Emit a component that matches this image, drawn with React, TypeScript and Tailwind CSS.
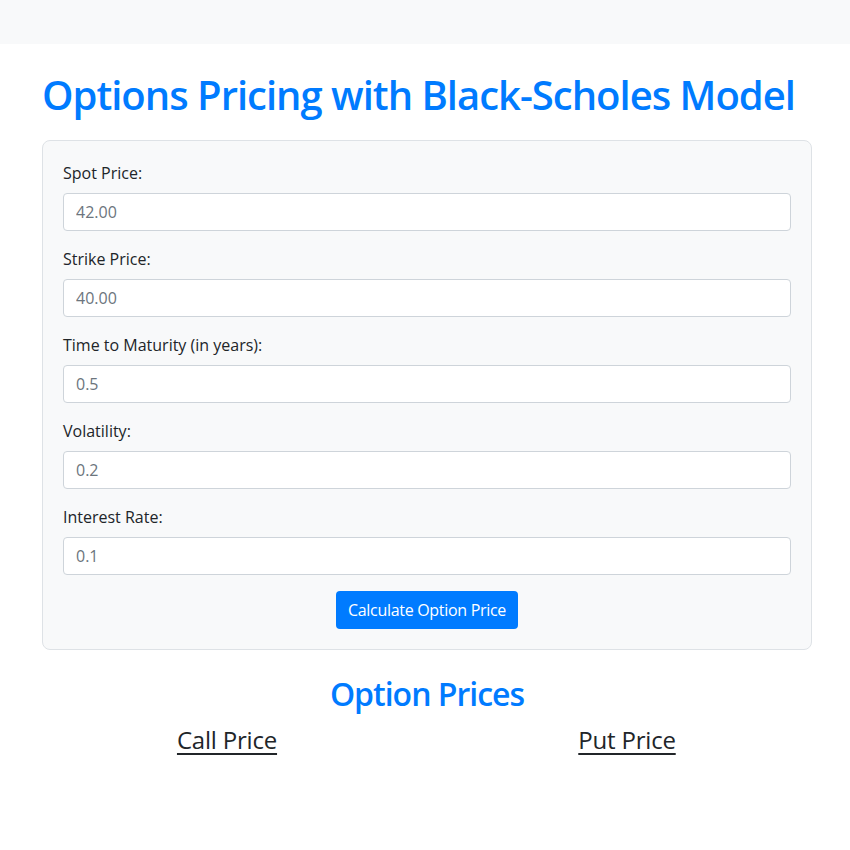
import React from "react";

const fields = [
  { label: "Spot Price:", value: "42.00" },
  { label: "Strike Price:", value: "40.00" },
  { label: "Time to Maturity (in years):", value: "0.5" },
  { label: "Volatility:", value: "0.2" },
  { label: "Interest Rate:", value: "0.1" },
];

export default function App() {
  return (
    <div
      className="min-h-[850px] bg-white text-[#212529]"
      style={{ fontFamily: '"Segoe UI", "Open Sans", "Noto Sans", sans-serif' }}
    >
      <div className="h-[44px] bg-[#f8f9fa]" />
      <div className="ml-[27px] w-[800px] px-[15px] pt-[27px]">
        <h1 className="mb-[21px] text-[40px] font-semibold leading-[48px] text-[#007bff] tracking-[-1px]">
          Options Pricing with Black-Scholes Model
        </h1>
        <div className="rounded-[8px] border border-[#dee2e6] bg-[#f8f9fa] p-[20px]">
          {fields.map((f) => (
            <div key={f.label} className="mb-[16px]">
              <label className="mb-[8px] block text-[16px] leading-[24px]">{f.label}</label>
              <input
                type="text"
                placeholder={f.value}
                className="block h-[38px] w-full rounded-[4px] border border-[#ced4da] bg-white px-[12px] text-[16px] text-[#495057] placeholder:text-[#6c757d] outline-none"
              />
            </div>
          ))}
          <div className="flex justify-center">
            <button className="h-[38px] rounded-[4px] bg-[#007bff] px-[12px] text-[16px] text-white tracking-[-0.3px]">
              Calculate Option Price
            </button>
          </div>
        </div>
        <h2 className="mt-[25px] mb-[12px] text-center text-[32px] font-semibold leading-[38px] text-[#007bff] tracking-[-1px]">
          Option Prices
        </h2>
        <div className="mx-[-15px] flex">
          <div className="w-1/2 text-center">
            <h4 className="text-[24px] leading-[29px] underline underline-offset-[4px] tracking-[-0.2px]">Call Price</h4>
          </div>
          <div className="w-1/2 text-center">
            <h4 className="text-[24px] leading-[29px] underline underline-offset-[4px] tracking-[-0.2px]">Put Price</h4>
          </div>
        </div>
      </div>
    </div>
  );
}
